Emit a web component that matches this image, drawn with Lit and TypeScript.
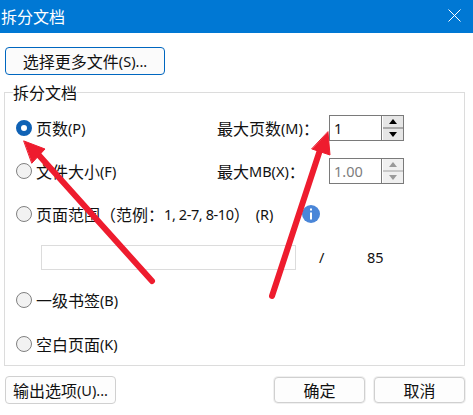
import { LitElement, html, css, svg } from "lit";
import { customElement } from "lit/decorators.js";

const l = (t: string) => html`<span class="l">${t}</span>`;

@customElement("app-root")
export class AppRoot extends LitElement {
  static styles = css`
    :host {
      display: block;
      position: relative;
      width: 473px;
      height: 415px;
      overflow: hidden;
      background: #fff;
      color: #111;
      font: 16px/20px "Noto Sans CJK SC", "Noto Sans", sans-serif;
    }
    .l { font: 14.5px/20px "Noto Sans", sans-serif; vertical-align: 1px; }
    .tight { letter-spacing: -0.4px; }
    .key { margin-left: 6px; }
    .title {
      height: 33px;
      background: #0078d4;
      color: #fff;
      display: flex;
      align-items: center;
      justify-content: space-between;
      padding: 0 12px 2px 1px;
      box-sizing: border-box;
    }
    .close { width: 13px; height: 13px; display: block; }
    .content { padding: 14px 8px 0 5px; }
    button {
      font: inherit;
      color: inherit;
      padding: 0;
      box-sizing: border-box;
      background: #fdfdfd;
      border: 1px solid #d0d0d0;
      border-radius: 4px;
    }
    .more {
      display: block;
      width: 160px;
      height: 28px;
      border-color: #0067c0;
      background: #fbfbfb;
    }
    fieldset {
      margin: 9px 0 0 -1px;
      padding: 0;
      border: 1px solid #dcdcdc;
      height: 282px;
      box-sizing: border-box;
    }
    .rows {
      display: grid;
      grid-template-rows: repeat(6, 43.2px);
      margin-top: 5px;
      padding: 0 0 0 11px;
    }
    legend { margin-left: 8px; padding: 0; line-height: 17px; }
    .row { display: flex; align-items: center; }
    .radio {
      width: 16px;
      height: 16px;
      box-sizing: border-box;
      border: 1.5px solid #808080;
      background: #f2f2f2;
      border-radius: 50%;
      margin-right: 4px;
      flex: none;
    }
    .radio.on { border: 5px solid #0f62b5; background: #fff; }
    .choice { width: 181px; white-space: nowrap; }
    .cap { width: 112px; white-space: nowrap; }
    .spin {
      width: 75px;
      height: 26px;
      box-sizing: border-box;
      border: 1px solid #7a7a7a;
      display: flex;
      background: #fff;
    }
    .spin .val { flex: 1; padding-left: 4px; line-height: 24px; border-right: 1px solid #7a7a7a; }
    .spin .btns {
      width: 20px;
      display: grid;
      grid-template-rows: 1fr 1fr;
      gap: 2px;
      background: #a9a9a9;
      margin-left: 1px;
    }
    .spin .btns span { background: #e6e6e6; display: flex; align-items: center; justify-content: center; }
    .up { width: 0; height: 0; border: 4px solid transparent; border-top: 0; border-bottom: 5px solid #000; }
    .down { width: 0; height: 0; border: 4px solid transparent; border-bottom: 0; border-top: 5px solid #000; }
    .spin.off .val { color: #7d7d7d; }
    .spin.off .btns { background: #c8c8c8; }
    .spin.off .btns span { background: #f0f0f0; }
    .spin.off .up { border-bottom-color: #9a9a9a; }
    .spin.off .down { border-top-color: #9a9a9a; }
    .range-text { white-space: nowrap; width: 266px; }
    .info {
      width: 18px;
      height: 18px;
      border-radius: 50%;
      background: #4a86d8;
      flex: none;
    }
    .range { padding-left: 25px; }
    .box { width: 255px; height: 25px; box-sizing: border-box; border: 1px solid #dcdcdc; }
    .slash { margin-left: 23px; width: 48px; }
    .footer { display: flex; margin-top: 10px; }
    .opt { width: 111px; height: 28px; }
    .ok { width: 91px; height: 26px; margin-top: 1px; margin-left: 158px; box-shadow: 0 0 0 1px #f0f0f0; }
    .cancel { width: 91px; height: 26px; margin-top: 1px; margin-left: 9px; box-shadow: 0 0 0 1px #f0f0f0; }
    .arrows { position: absolute; left: 0; top: 0; width: 473px; height: 415px; pointer-events: none; }
  `;

  render() {
    return html`
      <div class="title">
        <span>拆分文档</span>
        <svg class="close" viewBox="0 0 13 13"><path d="M.5.5l12 12M12.5.5l-12 12" stroke="#fff" fill="none"/></svg>
      </div>
      <div class="content">
        <button class="more">选择更多文件${l("(S)...")}</button>
        <fieldset>
          <legend>拆分文档</legend>
          <div class="rows">
            <div class="row">
              <span class="radio on"></span><span class="choice">页数${l("(P)")}</span>
              <span class="cap">最大页数${l("(M)")}：</span>
              <div class="spin"><span class="val l">1</span><div class="btns"><span><i class="up"></i></span><span><i class="down"></i></span></div></div>
            </div>
            <div class="row">
              <span class="radio"></span><span class="choice">文件大小${l("(F)")}</span>
              <span class="cap">最大${l("MB(X)")}：</span>
              <div class="spin off"><span class="val l">1.00</span><div class="btns"><span><i class="up"></i></span><span><i class="down"></i></span></div></div>
            </div>
            <div class="row">
              <span class="radio"></span><span class="range-text">页面范围（范例：<span class="l tight">1, 2-7, 8-10</span>）<span class="l key">(R)</span></span>
              <svg class="info" viewBox="0 0 18 18"><rect x="8" y="7.5" width="2" height="7" fill="#fff"/><rect x="8" y="3.5" width="2" height="2" fill="#fff"/></svg>
            </div>
            <div class="row range">
              <div class="box"></div><span class="slash l">/</span>${l("85")}
            </div>
            <div class="row"><span class="radio"></span><span>一级书签${l("(B)")}</span></div>
            <div class="row"><span class="radio"></span><span>空白页面${l("(K)")}</span></div>
          </div>
        </fieldset>
        <div class="footer">
          <button class="opt">输出选项${l("(U)...")}</button>
          <button class="ok">确定</button>
          <button class="cancel">取消</button>
        </div>
      </div>
      <svg class="arrows" viewBox="0 0 473 415">
        ${svg`<g fill="#ee1c2e" stroke="#ee1c2e" stroke-linecap="round" stroke-linejoin="round">
          <path d="M152 281L36 152" stroke-width="6" fill="none"/>
          <path d="M24 141L45 149L32 163Z" stroke-width="1"/>
          <path d="M272 296L320 150" stroke-width="6" fill="none"/>
          <path d="M328 132L330 155L312 149Z" stroke-width="1"/>
        </g>`}
      </svg>
    `;
  }
}
